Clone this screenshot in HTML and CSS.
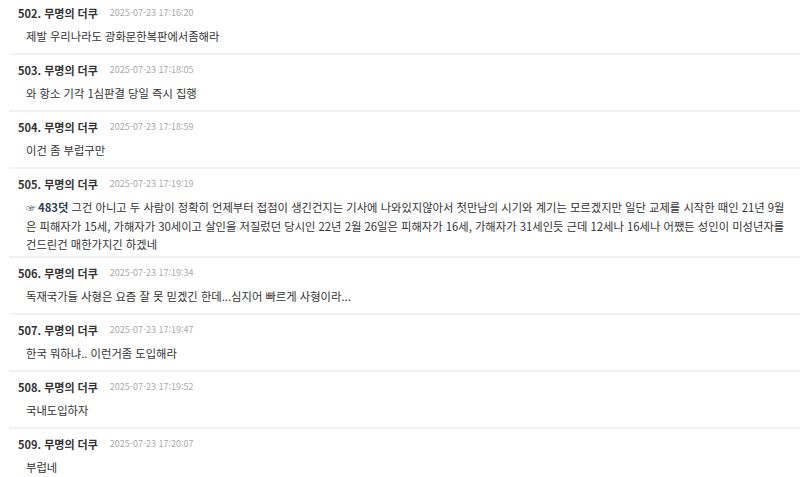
FILE: index.html
```html
<!DOCTYPE html>
<html lang="ko">
<head>
  <meta charset="UTF-8" />
  <meta name="viewport" content="width=device-width, initial-scale=1.0"/>
  <title>댓글</title>
  <link rel="stylesheet" href="styles.css">
</head>
<body>
  <ul class="comments">
    <li class="comment">
      <div class="comment-head"><span class="nick">502. 무명의 더쿠</span><span class="date">2025-07-23 17:16:20</span></div>
      <div class="comment-body">제발 우리나라도 광화문한복판에서좀해라</div>
    </li>
    <li class="comment">
      <div class="comment-head"><span class="nick">503. 무명의 더쿠</span><span class="date">2025-07-23 17:18:05</span></div>
      <div class="comment-body">와 항소 기각 1심판결 당일 즉시 집행</div>
    </li>
    <li class="comment">
      <div class="comment-head"><span class="nick">504. 무명의 더쿠</span><span class="date">2025-07-23 17:18:59</span></div>
      <div class="comment-body">이건 좀 부럽구만</div>
    </li>
    <li class="comment">
      <div class="comment-head"><span class="nick">505. 무명의 더쿠</span><span class="date">2025-07-23 17:19:19</span></div>
      <div class="comment-body"><a class="reply-to" href="#"><span class="hand">☞</span>483덧</a> 그건 아니고 두 사람이 정확히 언제부터 접점이 생긴건지는 기사에 나와있지않아서 첫만남의 시기와 계기는 모르겠지만 일단 교제를 시작한 때인 21년 9월은 피해자가 15세, 가해자가 30세이고 살인을 저질렀던 당시인 22년 2월 26일은 피해자가 16세, 가해자가 31세인듯 근데 12세나 16세나 어쨌든 성인이 미성년자를 건드린건 매한가지긴 하겠네</div>
    </li>
    <li class="comment">
      <div class="comment-head"><span class="nick">506. 무명의 더쿠</span><span class="date">2025-07-23 17:19:34</span></div>
      <div class="comment-body">독재국가들 사형은 요즘 잘 못 믿겠긴 한데...심지어 빠르게 사형이라...</div>
    </li>
    <li class="comment">
      <div class="comment-head"><span class="nick">507. 무명의 더쿠</span><span class="date">2025-07-23 17:19:47</span></div>
      <div class="comment-body">한국 뭐하냐.. 이런거좀 도입해라</div>
    </li>
    <li class="comment">
      <div class="comment-head"><span class="nick">508. 무명의 더쿠</span><span class="date">2025-07-23 17:19:52</span></div>
      <div class="comment-body">국내도입하자</div>
    </li>
    <li class="comment">
      <div class="comment-head"><span class="nick">509. 무명의 더쿠</span><span class="date">2025-07-23 17:20:07</span></div>
      <div class="comment-body">부럽네</div>
    </li>
  </ul>
</body>
</html>
```

FILE: styles.css
```css
body {
  margin: 0;
  background: #fff;
  color: #333;
  font-family: "Noto Sans CJK KR", "Noto Sans", sans-serif;
  font-size: 11px;
}

.comments {
  list-style: none;
  margin: 0;
  padding: 0;
}

.comment {
  margin-left: 9px;
  padding: 8px 0 3px;
  border-bottom: 2px solid #f2f2f2;
}

.comment:first-child {
  padding-top: 6px;
}

.comment-head {
  display: flex;
  align-items: center;
  height: 14px;
  padding-left: 9px;
}

.nick {
  font-weight: bold;
  color: #333;
  line-height: 14px;
}

.date {
  margin-left: 12px;
  font-size: 9px;
  line-height: 14px;
  color: #aaa;
}

.comment-body {
  box-sizing: border-box;
  min-height: 24px;
  margin-top: 6px;
  padding: 1px 12px 0 17px;
  font-size: 11.3px;
  line-height: 18px;
  color: #333;
}

.reply-to {
  color: #2d3d61;
  font-weight: bold;
  text-decoration: none;
}

.hand {
  display: inline-block;
  font-size: 10px;
  font-weight: normal;
  margin-right: 2px;
}
```
